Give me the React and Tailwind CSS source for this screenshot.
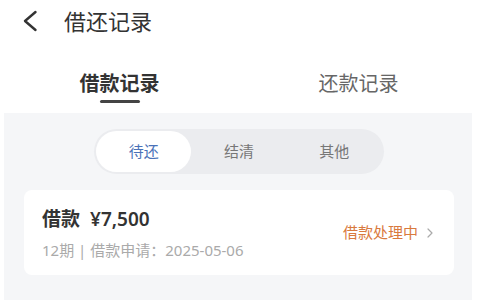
import { ChevronRight } from 'lucide-react'

const font = { fontFamily: '"Noto Sans", "Noto Sans CJK SC", sans-serif' }

function BackArrow() {
  return (
    <svg width="16" height="22" viewBox="0 0 16 22" fill="none" className="text-[#333]">
      <path d="M13.5 2 L3 11 L13.5 20" stroke="currentColor" strokeWidth="2.4" strokeLinecap="round" strokeLinejoin="round" />
    </svg>
  )
}

export default function App() {
  const segments = ['待还', '结清', '其他']

  return (
    <div className="h-[300px] w-[480px] overflow-hidden bg-white" style={font}>
      {/* header */}
      <div className="flex h-[42px] items-center pl-[22px]">
        <BackArrow />
        <span className="ml-[26px] text-[22px] leading-none text-[#333]">借还记录</span>
      </div>

      {/* tabs */}
      <div className="mt-[29px] grid w-[478px] grid-cols-2">
        <div className="flex flex-col items-center">
          <span className="text-[20px] font-bold leading-[26px] text-[#333]">借款记录</span>
          <span className="mt-[3px] h-[3px] w-[40px] rounded-full bg-[#444]" />
        </div>
        <div className="flex flex-col items-center">
          <span className="text-[20px] leading-[26px] text-[#666]">还款记录</span>
        </div>
      </div>

      {/* content */}
      <div className="ml-[4px] mt-[10px] h-[200px] w-[468px] bg-[#f5f6f8] pl-[20px] pr-[18px] pt-[16px]">
        <div className="ml-[70px] flex h-[45px] w-[290px] items-center rounded-full bg-[#ebecef] p-[2px]">
          {segments.map((s, i) => (
            <div
              key={s}
              className={
                i === 0
                  ? 'flex h-full flex-1 items-center justify-center rounded-full bg-white text-[15px] text-[#4a72b8]'
                  : 'flex h-full flex-1 items-center justify-center text-[15px] text-[#777]'
              }
            >
              {s}
            </div>
          ))}
        </div>

        <div className="mt-[16px] flex h-[85px] items-center justify-between rounded-[8px] bg-white pl-[18px] pr-[16px]">
          <div className="flex flex-col">
            <div className="flex items-baseline text-[19px] font-semibold leading-[26px] text-[#333]">
              <span>借款</span>
              <span className="ml-[10px]">¥7,500</span>
            </div>
            <div className="mt-[9px] text-[15px] leading-[18px] text-[#aaa]">
              12期 | 借款申请：2025-05-06
            </div>
          </div>
          <div className="flex items-center">
            <span className="text-[15px] text-[#d97a3e]">借款处理中</span>
            <ChevronRight className="ml-[4px] h-[16px] w-[16px] text-[#aaa]" strokeWidth={1.8} />
          </div>
        </div>
      </div>
    </div>
  )
}
